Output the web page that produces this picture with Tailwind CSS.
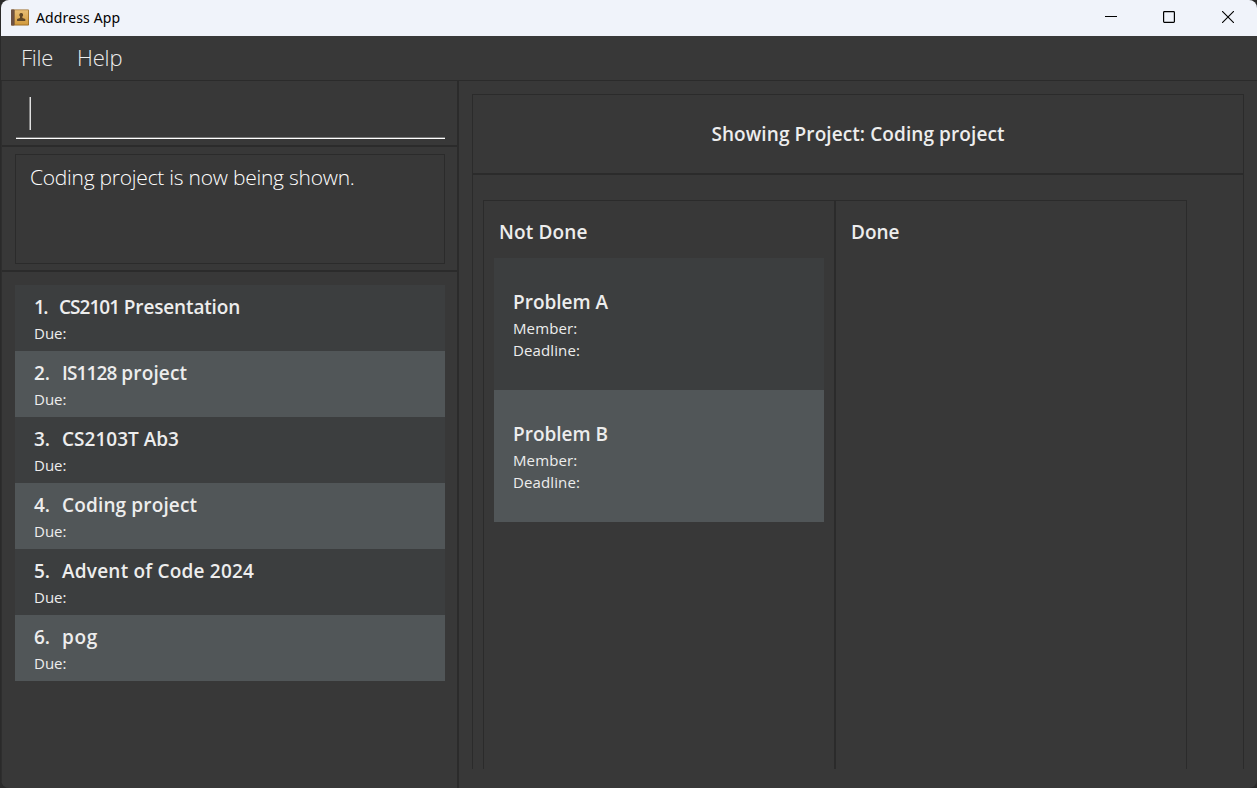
<!DOCTYPE html>
<html lang="en">
<head>
<meta charset="utf-8">
<title>Address App</title>
<script src="https://cdn.jsdelivr.net/npm/@tailwindcss/browser@4"></script>
</head>
<body class="h-[788px] w-[1257px] overflow-hidden bg-[#2a2a2a] pl-px font-['Open_Sans','Noto_Sans',sans-serif] text-[#ededed]">
<div class="flex h-[788px] flex-col overflow-hidden rounded-lg bg-[#383838] whitespace-nowrap">
  <header class="flex h-9 shrink-0 items-center bg-[#f0f3fa] text-black">
    <svg class="mb-[2px] ml-[10px] h-[17px] w-[18px]" viewBox="0 0 18 17">
      <defs><linearGradient id="g" x1="0" y1="0" x2="0" y2="1"><stop offset="0" stop-color="#e8bd75"/><stop offset="1" stop-color="#d29a3c"/></linearGradient></defs>
      <rect width="18" height="16" y=".5" rx=".8" fill="#9a6a24"/>
      <rect x="3.500" y="1.200" width="13.700" height="14.400" fill="url(#g)"/>
      <rect y=".5" width="3.500" height="16" rx=".8" fill="#6d5142"/>
      <path d="M10.200 4a1.900 1.900 0 0 1 1.200 3.400v1.600l2.900 1v2H6.100v-2L9 9V7.400A1.900 1.900 0 0 1 10.200 4z" fill="#5f4526"/>
    </svg>
    <span class="mb-[2px] ml-[7px] font-['Noto_Sans'] text-[14px] tracking-[0.13px]">Address App</span>
    <div class="mb-[2px] ml-auto flex items-center">
      <svg class="mr-[46px] size-3" viewBox="0 0 12 12"><path d="M0 5.500h12" stroke="#000"/></svg>
      <svg class="mr-[47px] size-3" viewBox="0 0 12 12"><rect x=".6" y=".6" width="10.800" height="10.800" rx=".8" fill="none" stroke="#000" stroke-width="1.200"/></svg>
      <svg class="mr-[23px] size-3" viewBox="0 0 12 12"><path d="M0 0l12 12M12 0L0 12" stroke="#000" stroke-width="1.100"/></svg>
    </div>
  </header>
  <nav class="flex h-[45px] shrink-0 items-center gap-6 border-b border-[#2b2b2b] pb-[2px] pl-5 text-[22px] font-light"><span class="tracking-[-0.25px]">File</span><span class="tracking-[-0.2px]">Help</span></nav>
  <main class="flex min-h-0 flex-1">
    <section class="flex w-[456px] shrink-0 flex-col border-l border-[#2e2e2e]">
      <div class="h-[64px] pr-3 pl-[14px]">
        <div class="flex h-[58px] items-center border-b border-white pt-[15px] pb-[7px] pl-[14px] shadow-[inset_0_-1px_0_#777]"><div class="h-[33px] w-px bg-[#e0e0e0] shadow-[-1px_0_0_#888]"></div></div>
      </div>
      <div class="h-[127px] border-y-2 border-[#2b2b2b] pt-[7px] pr-3 pl-[13px]">
        <div class="h-[110px] border border-[#2b2b2b] pt-[6px] pl-[14px] text-[21px] leading-[32px] font-light tracking-[-0.25px] text-white">Coding project is now being shown.</div>
      </div>
      <ul class="pt-[13px] pr-3 pl-[13px] text-[15px]">
        <li class="h-[66px] bg-[#3c3e3f] pt-2 pl-[19px]"><p class="flex gap-3 text-[19px] leading-7 font-semibold"><span class="tracking-[-1.500px]">1.</span><span class="tracking-[-0.150px]"><span class="tracking-[-1px]">CS2101</span> Presentation</span></p><p class="leading-6">Due:</p></li>
        <li class="h-[66px] bg-[#515658] pt-2 pl-[19px]"><p class="flex gap-3 text-[19px] leading-7 font-semibold"><span>2.</span><span><span class="tracking-[-0.900px]">IS1128</span> <span class="tracking-[0.150px]">project</span></span></p><p class="leading-6">Due:</p></li>
        <li class="h-[66px] bg-[#3c3e3f] pt-2 pl-[19px]"><p class="flex gap-3 text-[19px] leading-7 font-semibold"><span>3.</span><span>CS2103T Ab3</span></p><p class="leading-6">Due:</p></li>
        <li class="h-[66px] bg-[#515658] pt-2 pl-[19px]"><p class="flex gap-3 text-[19px] leading-7 font-semibold"><span>4.</span><span class="tracking-[0.140px]">Coding project</span></p><p class="leading-6">Due:</p></li>
        <li class="h-[66px] bg-[#3c3e3f] pt-2 pl-[19px]"><p class="flex gap-3 text-[19px] leading-7 font-semibold"><span>5.</span><span class="tracking-[0.200px]">Advent of Code 2024</span></p><p class="leading-6">Due:</p></li>
        <li class="h-[66px] bg-[#515658] pt-2 pl-[19px]"><p class="flex gap-3 text-[19px] leading-7 font-semibold"><span>6.</span><span class="tracking-[0.600px]">pog</span></p><p class="leading-6">Due:</p></li>
      </ul>
    </section>
    <section class="flex flex-1 flex-col border-l-2 border-[#2b2b2b] pt-[13px] pr-[13px] pb-[19px] pl-[13px]">
      <div class="flex min-h-0 flex-1 flex-col border-x border-t border-[#2b2b2b]">
        <div class="flex h-[80px] shrink-0 items-center justify-center border-b-2 border-[#2b2b2b] text-[19px] font-semibold tracking-[0.090px]">Showing Project: Coding project</div>
        <div class="flex min-h-0 flex-1 pt-[25px] pl-[10px]">
          <div class="flex w-[704px] border-x border-t border-[#2b2b2b]">
            <div class="w-[352px] border-r-2 border-[#2b2b2b] pt-[15px] pl-[10px]">
              <h2 class="h-[42px] pl-[5px] text-[19px] leading-8 font-semibold tracking-[0.140px]">Not Done</h2>
              <div class="h-[132px] w-[330px] bg-[#3c3e3f] pt-[30px] pl-[19px] text-[15px] leading-[22px] tracking-[0.120px]"><p class="mb-px text-[19px] leading-7 font-semibold tracking-normal">Problem A</p><p>Member:</p><p>Deadline:</p></div>
              <div class="h-[132px] w-[330px] bg-[#515658] pt-[30px] pl-[19px] text-[15px] leading-[22px] tracking-[0.120px]"><p class="mb-px text-[19px] leading-7 font-semibold tracking-normal">Problem B</p><p>Member:</p><p>Deadline:</p></div>
            </div>
            <div class="pt-[15px] pl-[15px]"><h2 class="text-[19px] leading-8 font-semibold">Done</h2></div>
          </div>
        </div>
      </div>
    </section>
  </main>
</div>
</body>
</html>
